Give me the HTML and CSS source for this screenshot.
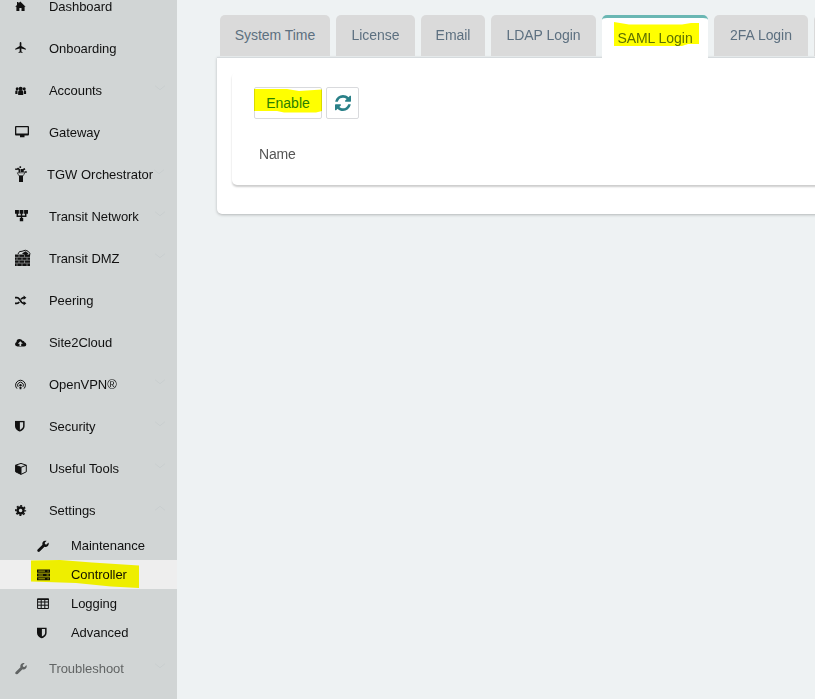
FILE: index.html
```html
<!DOCTYPE html>
<html lang="en">
<head>
<meta charset="utf-8">
<title>Controller Settings</title>
<link rel="stylesheet" href="styles.css">
</head>
<body>
<svg width="0" height="0" class="defs">
  <symbol id="wrench" viewBox="0 0 512 512"><path d="M507.73 109.1c-2.24-9.03-13.54-12.09-20.12-5.51l-74.36 74.36-67.88-11.31-11.31-67.88 74.36-74.36c6.62-6.62 3.43-17.9-5.66-20.16-47.38-11.74-99.55.91-136.58 37.93-39.64 39.64-50.55 97.1-34.05 147.2L18.74 402.76c-24.99 24.99-24.99 65.51 0 90.5 24.99 24.99 65.51 24.99 90.5 0l213.21-213.21c50.12 16.71 107.47 5.68 147.37-34.22 37.07-37.07 49.7-89.32 37.91-136.73z"/></symbol>
  <symbol id="shield" viewBox="0 0 10 11"><path fill-rule="evenodd" d="M0 0H9.6V5.5C9.6 8 7.5 9.8 4.8 11C2.1 9.8 0 8 0 5.500ZM4.900 1.500V9.100C6.800 8.100 8.100 7 8.100 5.500V1.500Z"/></symbol>
  <symbol id="down" viewBox="0 0 12 6"><path d="M1 .7L6 4.700L11 .7" fill="none" stroke="currentColor"/></symbol>
</svg>
<div class="app">
  <nav class="sidebar">
    <a class="item"><svg class="icon" viewBox="0 0 18 18"><path d="M6.300 4.500L11.600 9.700H10.600V14H7.500V11H5.400V14H2.400V9.700H1.200L3 8V5H4.500V6.300Z"/></svg><span>Dashboard</span></a>
    <a class="item"><svg class="icon" viewBox="0 0 18 18"><path transform="translate(.1 2) scale(.56 .55)" d="M21 16v-2l-8-5V3.500c0-.83-.67-1.500-1.500-1.500S10 2.670 10 3.500V9l-8 5v2l8-2.500V19l-2 1.500V22l3.500-1 3.500 1v-1.500L13 19v-5.500l8 2.500z"/></svg><span>Onboarding</span></a>
    <a class="item"><svg class="icon" viewBox="0 0 18 18"><circle cx="6.700" cy="7.700" r="2"/><circle cx="3.200" cy="7.700" r="1.500"/><circle cx="10.200" cy="7.700" r="1.500"/><path d="M4.200 14Q3.700 9.900 5.300 9.300H8.100Q9.700 9.900 9.200 14ZM1.300 13V10.200Q1.500 9 3.500 9.200V13ZM12.100 13V10.200Q11.900 9 9.900 9.200V13Z"/></svg><span>Accounts</span><svg class="chev"><use href="#down"/></svg></a>
    <a class="item"><svg class="icon" viewBox="0 0 18 18"><path fill-rule="evenodd" d="M2 3H14Q15 3 15 4V11.500Q15 12.500 14 12.500H10.500V14.300H6V12.500H2Q1 12.500 1 11.500V4Q1 3 2 3ZM2.300 4.200V10.500H13.700V4.200Z"/></svg><span>Gateway</span></a>
    <a class="item tgw"><svg class="icon" viewBox="0 0 18 18"><path d="M5 11H9V17H5Z"/><path d="M3.300 7.800H10.800L9.300 10.600H4.800Z" fill="#d1d5d5" stroke="currentColor" stroke-width=".7"/><path d="M5.300 7.500V4.700L3.500 3M1.200 4.300L4 4M6.300 3V1.200M7.400 7V4M9 7V4.800L11 3.700M10.500 7H12.800" fill="none" stroke="currentColor" stroke-width="1.600"/></svg><span>TGW Orchestrator</span><svg class="chev"><use href="#down"/></svg></a>
    <a class="item"><svg class="icon" viewBox="0 0 18 18"><path d="M1 3H4.900V6.700H1ZM5.600 3H9.400V6.700H5.600ZM10.100 3H14V6.700H10.100ZM5.800 11H9.200V14.300H5.800Z"/><path d="M3.300 6V9.200H11.700V6M7.500 6V12" fill="none" stroke="currentColor" stroke-width="1.500"/></svg><span>Transit Network</span><svg class="chev"><use href="#down"/></svg></a>
    <a class="item"><svg class="icon" viewBox="0 0 18 18"><path d="M1 5.500H16V17H1Z"/><path d="M1 8.300H16M1 11.200H16M1 14.100H16M5 5.500V8M10.500 5.500V8M3 8.500V11M8 8.500V11M13 8.500V11M5 11.500V14M10.500 11.500V14M3 14.500V17M8 14.500V17M13 14.500V17" stroke="#d1d5d5" stroke-width=".5"/><path d="M4 5Q5 1.500 8 2.300Q11.500.2 14 2.200Q17 4 15.500 7" fill="none" stroke="currentColor" stroke-width="1"/><path d="M8 4.500L11.500 2.300L14.500 4.500L12 6.500Z"/></svg><span>Transit DMZ</span><svg class="chev"><use href="#down"/></svg></a>
    <a class="item"><svg class="icon" viewBox="0 0 18 18"><path d="M1 6.700H3Q4.300 6.700 5.500 8.300L7.500 11.200Q8.400 12.300 10.200 12.300M1 12.300H3Q4.300 12.300 5.300 11M7.100 8.200Q8.300 6.700 10.200 6.700" fill="none" stroke="currentColor" stroke-width="1.700"/><path d="M9.600 4.600L12.400 6.700L9.600 8.800ZM9.600 10.200L12.400 12.300L9.600 14.400Z"/></svg><span>Peering</span></a>
    <a class="item"><svg class="icon" viewBox="0 0 18 18"><path fill-rule="evenodd" d="M3.500 13.500Q1 13.300 1 11.200Q1 9.500 2.500 8.900Q2.500 6 5.500 6Q7.700 6 8.500 7.700Q10.400 7.500 10.500 9.300Q12.300 9.700 12.300 11.500Q12.300 13.500 10.200 13.500ZM6.300 8.200L3.900 10.700H5.500V12.900H7.200V10.700H8.800Z"/></svg><span>Site2Cloud</span></a>
    <a class="item"><svg class="icon" viewBox="0 0 18 18"><path d="M3 13.600A4.900 4.900 0 1 1 10 13.600M4.100 11.800A2.900 2.900 0 1 1 8.900 11.800" fill="none" stroke="currentColor" stroke-width="1"/><circle cx="6.500" cy="10.200" r="1.200"/><path d="M5.400 11.900H7.600L7.300 14.300H5.700Z"/></svg><span>OpenVPN®</span><svg class="chev"><use href="#down"/></svg></a>
    <a class="item"><svg class="icon" viewBox="0 0 18 18"><use href="#shield" x="1" y="3.800" width="10" height="11"/></svg><span>Security</span><svg class="chev"><use href="#down"/></svg></a>
    <a class="item"><svg class="icon" viewBox="0 0 18 18"><path d="M7 4.400L12.300 6.200V12.800L7 15.400L1.600 12.800V6.200ZM1.600 6.200L7 8.300L12.300 6.200M7 8.300V15" fill="none" stroke="currentColor" stroke-width="1" stroke-linejoin="round"/><path d="M1.600 6.200L7 8.300V15.400L1.600 12.800Z"/></svg><span>Useful Tools</span><svg class="chev"><use href="#down"/></svg></a>
    <a class="item"><svg class="icon" viewBox="0 0 18 18"><circle cx="6.600" cy="9.500" r="3" fill="none" stroke="currentColor" stroke-width="2.400"/><circle cx="6.600" cy="9.500" r="4.700" fill="none" stroke="currentColor" stroke-width="1.700" stroke-dasharray="1.900 1.791" stroke-dashoffset=".95"/></svg><span>Settings</span><svg class="chev up"><use href="#down"/></svg></a>
    <div class="sub">
      <a class="subitem"><svg class="icon" viewBox="0 0 18 18"><use href="#wrench" x="1" y="3.500" width="12" height="11.500"/></svg><span>Maintenance</span></a>
      <a class="subitem active"><svg class="icon" viewBox="0 0 18 18"><path d="M1 3.500H14V6.700H1ZM1 7.500H14V10.500H1ZM1 11.300H14V14.300H1Z"/><path d="M2.300 5.100H9M2.300 9H7M2.300 12.800H9M11.500 5.100H12.700M10.500 9H12.700M11.500 12.800H12.700" stroke="#eee" stroke-width=".7"/></svg><span>Controller</span>
        <svg class="mark mark-nav" viewBox="0 0 109 28"><path d="M0 .5L29 0L61 2.500L108 5.500V28L80 26.500L45 23L0 21.500Z"/></svg></a>
      <a class="subitem"><svg class="icon" viewBox="0 0 18 18"><path d="M1.600 4H12.400V13.500H1.600ZM1.600 7H12.400M1.600 10.200H12.400M5.200 4V13.500M8.800 4V13.500" fill="none" stroke="currentColor" stroke-width="1"/><path d="M1.200 3.500H12.900V5H1.200Z"/></svg><span>Logging</span></a>
      <a class="subitem"><svg class="icon" viewBox="0 0 18 18"><use href="#shield" x="1" y="3.500" width="10" height="11"/></svg><span>Advanced</span></a>
    </div>
    <a class="item muted"><svg class="icon" viewBox="0 0 18 18"><use href="#wrench" x="1" y="4" width="12" height="11.500"/></svg><span>Troubleshoot</span><svg class="chev"><use href="#down"/></svg></a>
  </nav>
  <main class="main">
    <div class="tabs">
      <a class="tab t1">System Time</a>
      <a class="tab t2">License</a>
      <a class="tab t3">Email</a>
      <a class="tab t4">LDAP Login</a>
      <a class="tab t5 selected">SAML Login<svg class="mark mark-tab" viewBox="0 0 86 25"><path d="M0 0L15 2.500H68L77 1H85V22H74L68 24H0Z"/></svg></a>
      <a class="tab t6">2FA Login</a>
      <a class="tab t7"></a>
    </div>
    <section class="panel">
      <div class="card">
        <div class="actions">
          <button class="btn enable">Enable<svg class="mark mark-btn" viewBox="0 0 69 24"><path d="M0 0H33L45 2L68 .5V22L62 23.500H30L23 22H0Z"/></svg></button>
          <button class="btn refresh"><svg viewBox="0 0 1536 1536"><path transform="translate(0 -128)" d="M1511 1056q0 5-1 7-64 268-268 434.500t-478 166.500q-146 0-282.500-55t-243.500-157l-129 129q-19 19-45 19t-45-19-19-45v-448q0-26 19-45t45-19h448q26 0 45 19t19 45-19 45l-137 137q71 66 161 102t187 36q134 0 250-65t186-179q11-17 53-117 8-23 30-23h192q13 0 22.500 9.500t9.500 22.500zm25-800v448q0 26-19 45t-45 19h-448q-26 0-45-19t-19-45 19-45l138-138q-148-137-349-137-134 0-250 65t-186 179q-11 17-53 117-8 23-30 23h-199q-13 0-22.500-9.500t-9.500-22.500v-7q65-268 270-434.500t480-166.500q146 0 284 55.500t245 156.500l130-129q19-19 45-19t45 19 19 45z"/></svg></button>
        </div>
        <div class="column-head">Name</div>
      </div>
    </section>
  </main>
</div>
</body>
</html>
```
FILE: styles.css
```css
* { box-sizing: border-box; }
body {
  margin: 0;
  background: #eef2f3;
  font-family: "Liberation Sans", Arial, sans-serif;
  overflow: hidden;
}
.defs { position: absolute; }
.app { display: flex; height: 699px; overflow: hidden; }

.sidebar {
  width: 177px;
  flex: none;
  background: #d1d5d5;
  font-size: 13px;
  letter-spacing: -.05px;
  color: #111;
  margin-top: -15px;
  height: 714px;
}
.item, .subitem { display: flex; align-items: center; white-space: nowrap; }
.item { height: 42px; padding: 0 11px 0 14px; }
.icon { width: 18px; height: 18px; flex: none; margin-right: 17px; fill: currentColor; }
.tgw { letter-spacing: 0; }
.tgw .icon { margin-right: 15px; }
.chev {
  width: 12px;
  height: 6px;
  flex: none;
  margin: 0 0 4px auto;
  color: #c9cecf;
}
.tgw .chev { margin-left: 0; }
.up { transform: scaleY(-1); }
.subitem { position: relative; height: 29px; padding-left: 36px; }
.subitem.active { background: #eee; }
.muted { color: #616464; }

.mark { position: absolute; fill: #ff0; mix-blend-mode: multiply; pointer-events: none; }
.mark-nav { left: 31px; top: 0; width: 109px; height: 28px; }
.mark-tab { left: 12px; top: 4px; width: 86px; height: 25px; }
.mark-btn { left: -1px; top: 1px; width: 69px; height: 24px; }

.main { flex: 1; min-width: 0; padding: 15px 0 0 40px; overflow: hidden; }
.tabs { display: flex; gap: 6px; padding-left: 3px; height: 42px; }
.tab {
  position: relative;
  flex: none;
  height: 41px;
  padding-top: 12px;
  border-radius: 5px 5px 0 0;
  background: #dadada;
  color: #5d7080;
  font-size: 14px;
  letter-spacing: -.05px;
  line-height: 16px;
  text-align: center;
  white-space: nowrap;
}
.t1 { width: 110px; }
.t2 { width: 79px; }
.t3 { width: 64px; }
.t4 { width: 105px; }
.t5 { width: 106px; }
.t6 { width: 94px; }
.t7 { width: 80px; }
.tab.selected {
  height: 43px;
  background: #fff;
  border-top: 3px solid #6ab7b3;
  z-index: 1;
}

.panel {
  width: 640px;
  height: 157px;
  padding: 14px 0 0 15px;
  background: #fff;
  border-top: 1px solid #d5dadd;
  border-radius: 0 0 0 5px;
  box-shadow: 0 1px 3px rgba(0, 0, 0, .25);
}
.card {
  height: 113px;
  padding: 15px 22px;
  border-radius: 5px;
  box-shadow: 0 2px 2px rgba(0, 0, 0, .2);
}
.actions { display: flex; gap: 4px; }
.btn {
  position: relative;
  height: 32px;
  padding: 0;
  background: #fff;
  border: 1px solid #d9dadd;
  border-radius: 2px;
  color: #2a8088;
  font: 14px "Liberation Sans", Arial, sans-serif;
}
.enable { width: 68px; }
.refresh { width: 33px; display: flex; align-items: center; justify-content: center; }
.refresh svg { width: 16px; height: 16px; fill: currentColor; }
.column-head { margin: 27px 0 0 5px; font-size: 14px; letter-spacing: -.2px; line-height: 16px; color: #555; }
```
